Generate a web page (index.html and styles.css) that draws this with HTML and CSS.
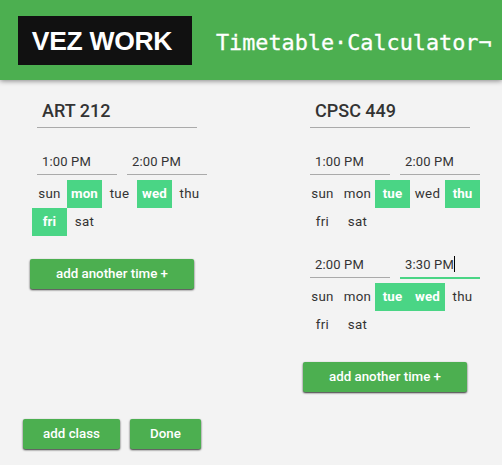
FILE: index.html
```html
<!DOCTYPE html>
<html lang="en">
<head>
<meta charset="utf-8">
<title>Timetable Calculator</title>
<link rel="stylesheet" href="styles.css">
</head>
<body>
<header class="header">
  <div class="logo">VEZ WORK</div>
  <h1 class="title">Timetable·Calculator¬</h1>
</header>
<main class="classes">
  <section class="class">
    <div class="name">ART 212</div>
    <div class="slot">
      <div class="times"><div class="time">1:00 PM</div><div class="time">2:00 PM</div></div>
      <div class="days"><span>sun</span><span class="on">mon</span><span>tue</span><span class="on">wed</span><span>thu</span><span class="on">fri</span><span>sat</span></div>
    </div>
    <button class="btn add-time">add another time +</button>
  </section>
  <section class="class">
    <div class="name">CPSC 449</div>
    <div class="slot">
      <div class="times"><div class="time">1:00 PM</div><div class="time">2:00 PM</div></div>
      <div class="days"><span>sun</span><span>mon</span><span class="on">tue</span><span>wed</span><span class="on">thu</span><span>fri</span><span>sat</span></div>
    </div>
    <div class="slot">
      <div class="times"><div class="time">2:00 PM</div><div class="time focus">3:30 PM<i class="caret"></i></div></div>
      <div class="days"><span>sun</span><span>mon</span><span class="on">tue</span><span class="on">wed</span><span>thu</span><span>fri</span><span>sat</span></div>
    </div>
    <button class="btn add-time">add another time +</button>
  </section>
</main>
<footer class="actions">
  <button class="btn add-class">add class</button>
  <button class="btn done">Done</button>
</footer>
</body>
</html>
```
FILE: styles.css
```css
* { box-sizing: border-box; }
body {
  margin: 0;
  height: 465px;
  background: #f3f3f3;
  color: #333;
  font-family: Roboto, sans-serif;
  display: flex;
  flex-direction: column;
}
.header {
  flex: none;
  height: 80px;
  padding: 16px 0 0 18px;
  display: flex;
  align-items: flex-start;
  background: #4caf50;
  color: #fff;
  box-shadow: 0 1px 5px rgba(0, 0, 0, .45);
}
.logo {
  width: 174px;
  height: 49px;
  background: #111;
  font: bold 26.5px/50px "Liberation Sans", sans-serif;
  text-align: center;
  letter-spacing: -.3px;
  white-space: nowrap;
  padding-right: 6px;
}
.title {
  margin: 0 0 0 24px;
  font: 21.8px/53px "DejaVu Sans Mono", monospace;
  -webkit-text-stroke: .3px #fff;
  white-space: nowrap;
}
.classes {
  flex: 1;
  display: flex;
  gap: 98px;
  padding: 16px 0 0 32px;
}
.class {
  flex: none;
  width: 175px;
}
.name {
  width: 160px;
  height: 32px;
  margin-left: 5px;
  padding-left: 5px;
  border-bottom: 1px solid #aaa;
  font-size: 18px;
  font-weight: 500;
  line-height: 30px;
}
.slot { padding-top: 15px; }
.name + .slot { padding-top: 20px; }
.times {
  display: flex;
  gap: 10px;
  margin-left: 5px;
}
.time {
  width: 80px;
  height: 27px;
  padding-left: 5px;
  border-bottom: 1px solid #aaa;
  font-size: 13px;
  line-height: 27px;
  letter-spacing: .15px;
  white-space: nowrap;
}
.focus {
  height: 28px;
  margin-bottom: -1px;
  border-bottom: 2px solid #4ad585;
}
.caret {
  display: inline-block;
  width: 1px;
  height: 16px;
  background: #000;
  vertical-align: -3px;
}
.days {
  display: grid;
  grid-template-columns: repeat(5, 35px);
  grid-auto-rows: 28px;
  margin-top: 5px;
}
.days span {
  font-size: 13.33px;
  line-height: 27px;
  letter-spacing: .3px;
  text-align: center;
}
.days .on {
  background: #4ad585;
  color: #fff;
  font-weight: 700;
  letter-spacing: .1px;
}
.btn {
  display: block;
  height: 30px;
  padding: 0;
  border: 0;
  border-radius: 2px;
  background: #4caf50;
  color: #fff;
  font: 500 13.33px/30px Roboto, sans-serif;
  box-shadow: 0 1px 2px rgba(0, 0, 0, .8);
}
.add-time {
  width: 164px;
  margin: 23px 0 0 -2px;
}
.actions {
  display: flex;
  gap: 10px;
  padding: 0 0 16px 23px;
}
.add-class { width: 97px; }
.done { width: 71px; }
```
